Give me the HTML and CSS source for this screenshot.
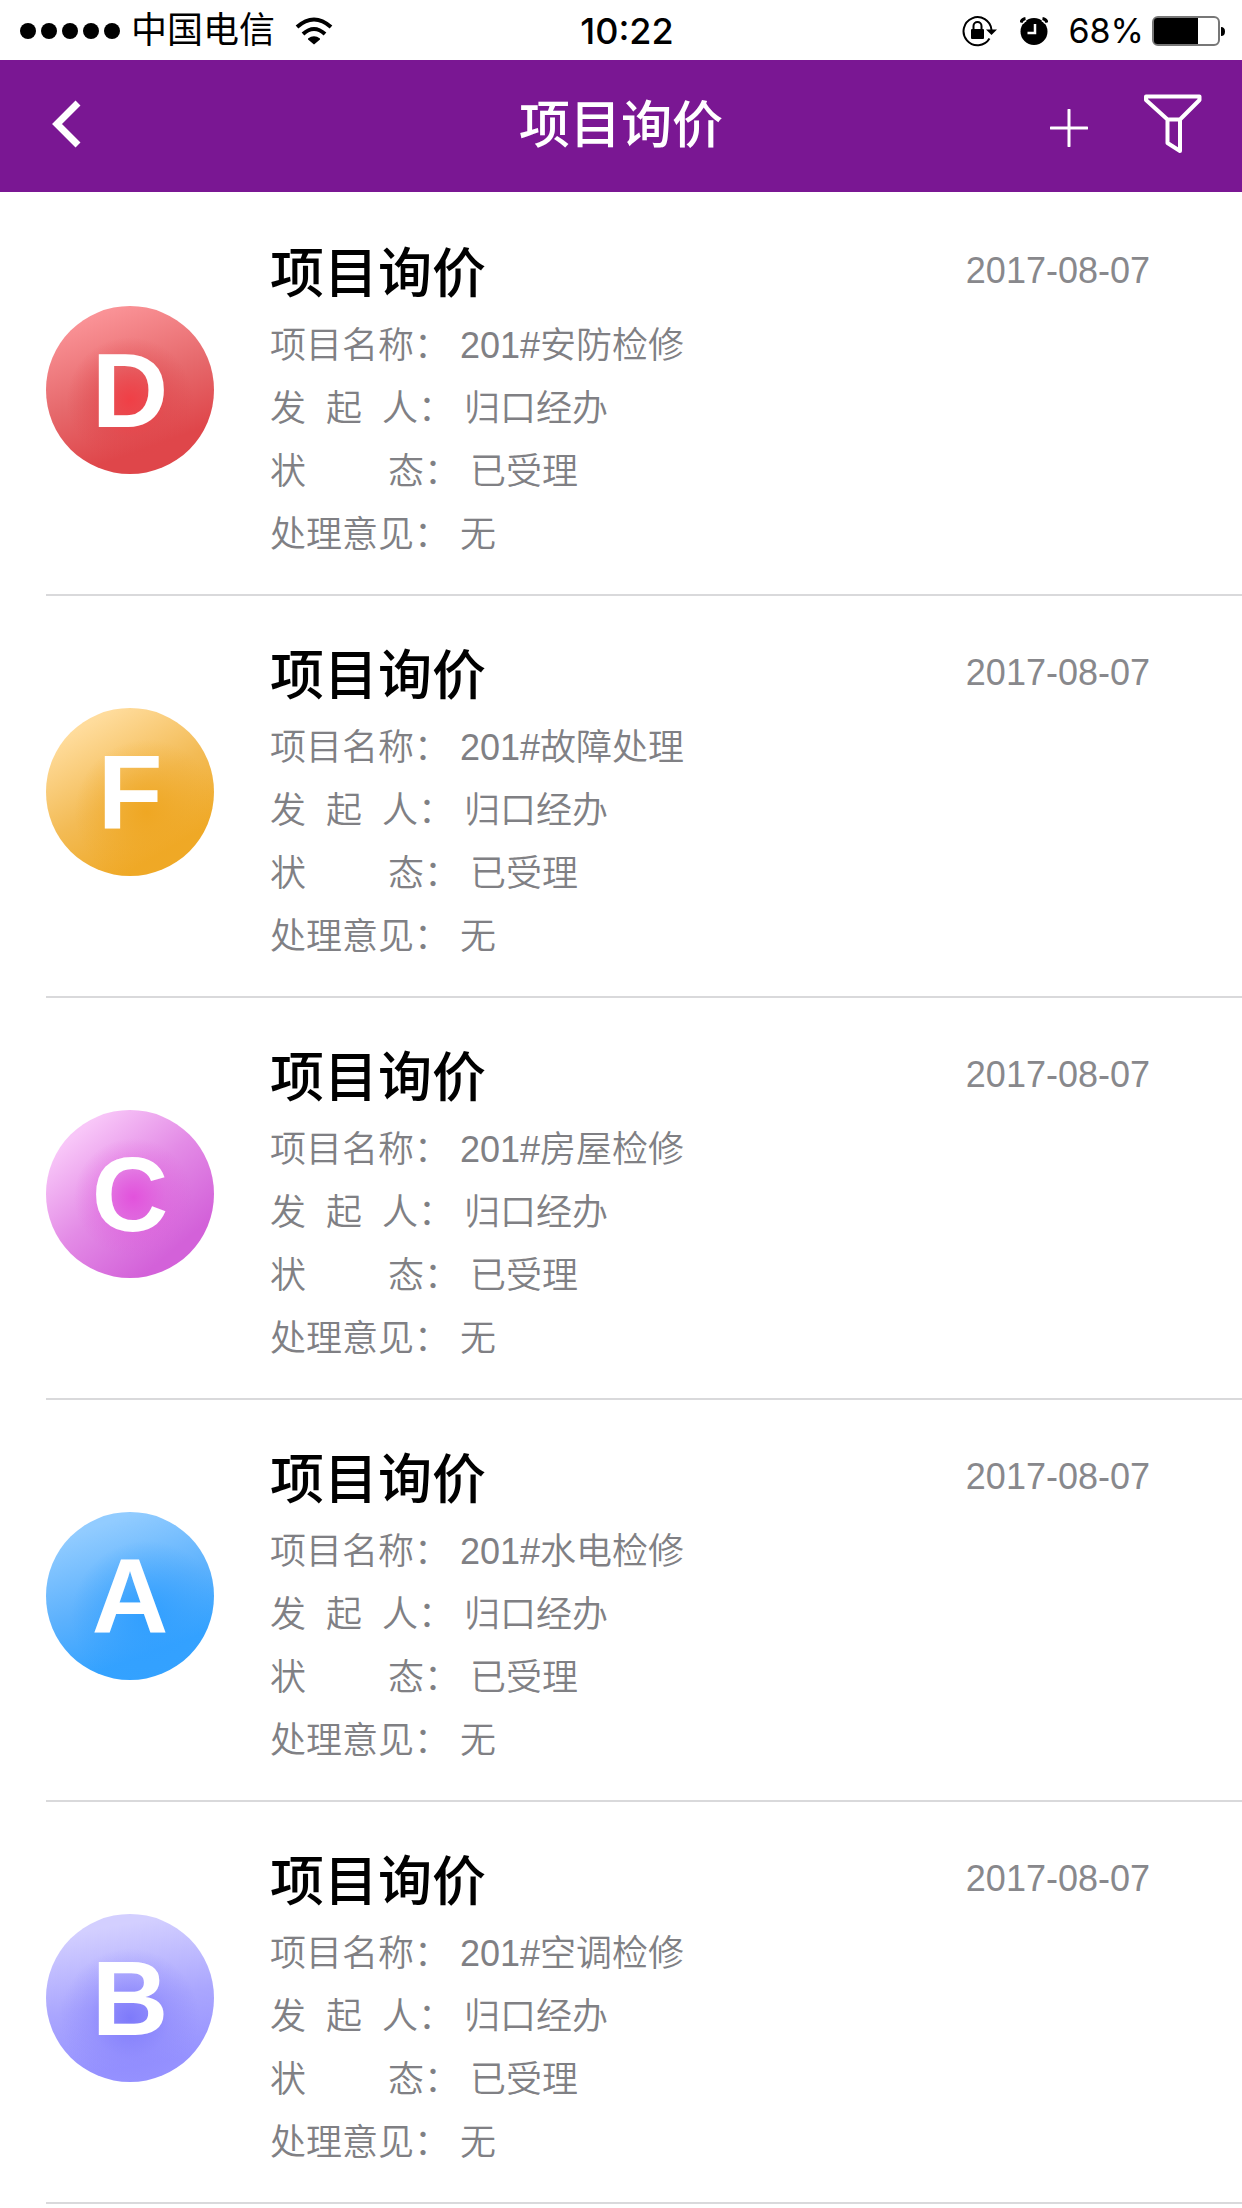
FILE: index.html
```html
<!DOCTYPE html>
<html lang="zh-CN">
<head>
<meta charset="utf-8">
<meta name="viewport" content="width=device-width, initial-scale=1">
<title>项目询价</title>
<link rel="stylesheet" href="styles.css">
</head>
<body>
<div class="status">
  <div class="status-side">
    <svg class="signal" width="101" height="18" viewBox="0 0 101 18" aria-hidden="true"><circle cx="8" cy="9" r="8"/><circle cx="29" cy="9" r="8"/><circle cx="50" cy="9" r="8"/><circle cx="71" cy="9" r="8"/><circle cx="92" cy="9" r="8"/></svg>
    <span class="carrier">中国电信</span>
    <svg class="wifi" width="38" height="28" viewBox="0 0 38 28" aria-hidden="true"><g fill="none" stroke="#000" stroke-width="4"><path d="M2 10Q19-5 36 10"/><path d="M8 17Q19 7 30 17"/></g><path d="M13 21.500Q19 17 25 21.500V22.500L19 27.500L13 22.500Z"/></svg>
  </div>
  <time class="clock">10:22</time>
  <div class="status-side status-right">
    <svg width="36" height="32" viewBox="0 0 36 32" aria-hidden="true"><path d="M27.500 23.500A14 14 0 1 1 29.500 15" fill="none" stroke="#000" stroke-width="2"/><path d="M24 14.500H35L29.500 20Z"/><rect x="9" y="14" width="13" height="10" rx="1"/><path d="M11.500 15V11A4 4 0 0 1 19.500 11V15" fill="none" stroke="#000" stroke-width="2"/></svg>
    <svg class="alarm" width="28" height="28" viewBox="0 0 28 28" aria-hidden="true"><circle cx="14" cy="14.500" r="13.500"/><path d="M1 6Q2 2 6 1.500M27 6Q26 2 22 1.500" fill="none" stroke="#fff" stroke-width="6"/><path d="M1 5.500Q2 2 5.500 1.500M27 5.500Q26 2 22.500 1.500" fill="none" stroke="#000" stroke-width="3"/><path d="M15 7V16H7.500" fill="none" stroke="#fff" stroke-width="2.500"/></svg>
    <span class="percent">68%</span>
    <svg width="74" height="30" viewBox="0 0 74 30" aria-hidden="true"><rect x="1" y="1" width="66" height="28" rx="5" fill="#fff" stroke="#777" stroke-width="2"/><path d="M5 2H46V28H5Q2 28 2 25V5Q2 2 5 2Z"/><path d="M69 11Q73 11 73 15.500Q73 20 69 20Z"/></svg>
  </div>
</div>
<header class="bar">
  <button class="icon-button back" type="button" aria-label="返回"><svg width="30" height="48" viewBox="0 0 30 48"><path d="M26 3L5 24L26 45" fill="none" stroke="#fff" stroke-width="7"/></svg></button>
  <h1 class="bar-title">项目询价</h1>
  <div class="bar-actions">
    <button class="icon-button" type="button" aria-label="添加"><svg class="plus" width="38" height="38" viewBox="0 0 38 38"><path d="M19 1V37M1 19H37" fill="none" stroke="#fff" stroke-width="3" stroke-linecap="round"/></svg></button>
    <button class="icon-button" type="button" aria-label="筛选"><svg width="58" height="60" viewBox="0 0 58 60"><path d="M2 2.500H55.500V6L36 25.500V57L23.500 49V25.500L2 6ZM23.500 25.500H36" fill="none" stroke="#fff" stroke-width="4" stroke-linejoin="round"/></svg></button>
  </div>
</header>
<main>
<ul class="list">
  <li class="item">
    <span class="avatar red">D</span>
    <div class="body">
      <h2 class="title">项目询价</h2>
      <p class="line">项目名称： 201#安防检修</p>
      <p class="line">发  起  人： 归口经办</p>
      <p class="line">状　　 态： 已受理</p>
      <p class="line">处理意见： 无</p>
    </div>
    <time class="date">2017-08-07</time>
  </li>
  <li class="item">
    <span class="avatar orange">F</span>
    <div class="body">
      <h2 class="title">项目询价</h2>
      <p class="line">项目名称： 201#故障处理</p>
      <p class="line">发  起  人： 归口经办</p>
      <p class="line">状　　 态： 已受理</p>
      <p class="line">处理意见： 无</p>
    </div>
    <time class="date">2017-08-07</time>
  </li>
  <li class="item">
    <span class="avatar pink">C</span>
    <div class="body">
      <h2 class="title">项目询价</h2>
      <p class="line">项目名称： 201#房屋检修</p>
      <p class="line">发  起  人： 归口经办</p>
      <p class="line">状　　 态： 已受理</p>
      <p class="line">处理意见： 无</p>
    </div>
    <time class="date">2017-08-07</time>
  </li>
  <li class="item">
    <span class="avatar blue">A</span>
    <div class="body">
      <h2 class="title">项目询价</h2>
      <p class="line">项目名称： 201#水电检修</p>
      <p class="line">发  起  人： 归口经办</p>
      <p class="line">状　　 态： 已受理</p>
      <p class="line">处理意见： 无</p>
    </div>
    <time class="date">2017-08-07</time>
  </li>
  <li class="item">
    <span class="avatar violet">B</span>
    <div class="body">
      <h2 class="title">项目询价</h2>
      <p class="line">项目名称： 201#空调检修</p>
      <p class="line">发  起  人： 归口经办</p>
      <p class="line">状　　 态： 已受理</p>
      <p class="line">处理意见： 无</p>
    </div>
    <time class="date">2017-08-07</time>
  </li>
</ul>
</main>
</body>
</html>
```
FILE: styles.css
```css
* { box-sizing: border-box; }
body, h1, h2, p, ul { margin: 0; padding: 0; }
body {
  background: #fff;
  color: #000;
  font-family: "Liberation Sans", "Noto Sans CJK SC", sans-serif;
  font-size: 36px;
}
svg { display: block; flex: none; }

/* Phone status bar */
.status {
  display: grid;
  grid-template-columns: 1fr auto 1fr;
  align-items: center;
  height: 60px;
  padding: 0 16px 0 20px;
}
.status-side { display: flex; align-items: center; line-height: 62px; }
.status-right { justify-content: flex-end; }
.carrier { margin: 0 20px 0 10px; }
.clock { font-family: Inter, sans-serif; font-weight: 500; line-height: 62px; margin-left: 8px; }
.alarm { margin: 0 20px 0 22px; }
.percent { font-family: Inter, sans-serif; font-size: 34px; margin-right: 8px; }

/* Navigation bar */
.bar {
  display: grid;
  grid-template-columns: 1fr auto 1fr;
  align-items: center;
  height: 132px;
  padding: 0 40px 4px;
  background: #7a1793;
  color: #fff;
}
.back { margin-left: 12px; }
.bar-title { font-size: 51px; font-weight: 500; line-height: 72px; padding-top: 4px; }
.bar-actions { display: flex; justify-content: flex-end; align-items: center; gap: 56px; }
.icon-button { justify-self: start; padding: 0; border: 0; background: none; cursor: pointer; }
.plus { margin-top: 8px; }

/* Inquiry list */
.list { list-style: none; padding-top: 2px; }
.item {
  display: grid;
  grid-template-columns: 168px 1fr auto;
  column-gap: 56px;
  margin-left: 46px;
  padding: 44px 92px 28px 0;
  border-bottom: 2px solid #d9d9db;
}
.avatar {
  width: 168px;
  height: 168px;
  margin-top: 68px;
  border-radius: 50%;
  color: #fff;
  font-size: 106px;
  font-weight: 700;
  line-height: 168px;
  text-align: center;
}
.red { background: radial-gradient(circle at 50% 56%, #f03f46 0, #e0464b66 30%, transparent 50%), linear-gradient(160deg, #fa9296 12%, #e6696c 48%, #df464a 78%); }
.orange { background: radial-gradient(circle at 60% 62%, #efa723 0, #efa72366 28%, transparent 50%), linear-gradient(150deg, #ffdc9c 15%, #f3bb55 50%, #efa927 80%); }
.pink { background: radial-gradient(circle at 52% 52%, #e252dc 0, #df5edc66 26%, transparent 48%), linear-gradient(140deg, #f8c6f8 16%, #e38be6 48%, #d361d9 80%); }
.blue { background: radial-gradient(circle at 60% 62%, #319fff 0, #319fff66 30%, transparent 52%), linear-gradient(160deg, #92ccff 14%, #5cb1fd 50%, #34a2ff 78%); }
.violet { background: radial-gradient(circle at 50% 62%, #7e7afa 0, #8984fc66 30%, transparent 52%), linear-gradient(170deg, #d3cfff 12%, #aaa6fe 52%, #9692ff 85%); }
.title { margin-bottom: 4px; font-size: 54px; font-weight: 500; line-height: 72px; }
.line { color: #808084; font-weight: 350; line-height: 63px; white-space: pre; }
.date { color: #88888c; line-height: 66px; }
```
